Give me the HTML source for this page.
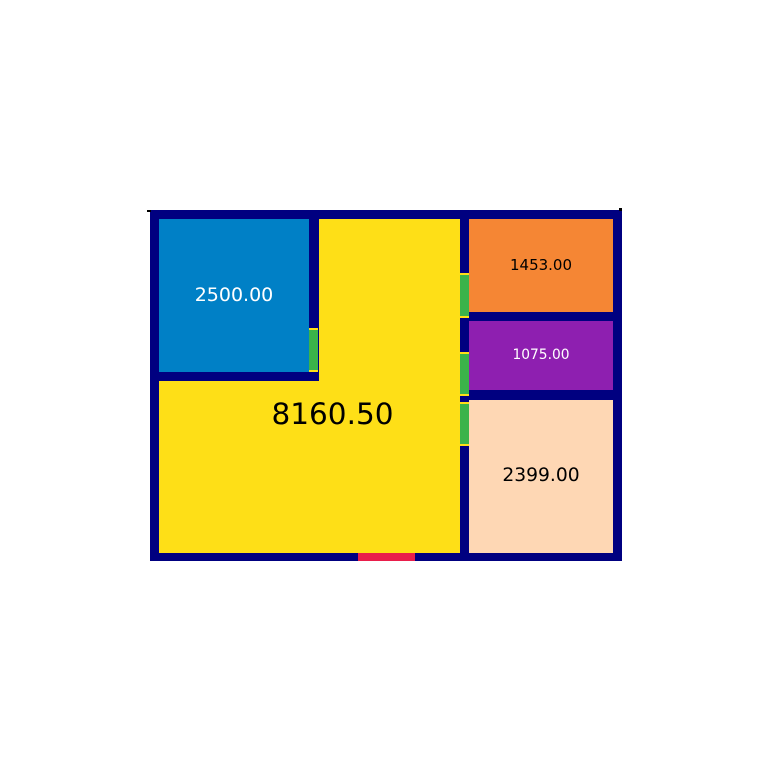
<!DOCTYPE html>
<html><head><style>
body{margin:0;width:769px;height:770px;background:#fff;position:relative;overflow:hidden;font-family:"DejaVu Sans","Liberation Sans",sans-serif}
div{position:absolute}
.t{display:flex;align-items:center;justify-content:center;white-space:nowrap}
.t span{position:relative;top:-1px}
</style></head><body>
<div style="left:150px;top:210px;width:472px;height:351px;background:#000080"></div>
<div style="left:147px;top:210px;width:4px;height:2px;background:#000"></div>
<div style="left:619px;top:208px;width:3px;height:3px;background:#000"></div>
<div style="left:319px;top:219px;width:141px;height:334px;background:#fedf17"></div>
<div style="left:159px;top:381px;width:301px;height:172px;background:#fedf17"></div>
<div class="t" style="left:159px;top:219px;width:150px;height:153px;background:#0080c6;color:#fff;font-size:19px"><span>2500.00</span></div>
<div class="t" style="left:469px;top:219px;width:144px;height:93px;background:#f58634;color:#000;font-size:15px"><span>1453.00</span></div>
<div class="t" style="left:469px;top:321px;width:144px;height:69px;background:#8e1fb0;color:#fff;font-size:13.8px"><span>1075.00</span></div>
<div class="t" style="left:469px;top:400px;width:144px;height:153px;background:#fed7b4;color:#000;font-size:18.7px"><span>2399.00</span></div>
<div class="t" style="left:230px;top:396px;width:205px;height:38px;color:#000;font-size:29.5px"><span>8160.50</span></div>
<div style="left:309px;top:328px;width:9px;height:44px;background:#3bb34a;border-top:2px solid #fedf17;border-bottom:2px solid #fedf17;box-sizing:border-box"></div>
<div style="left:460px;top:273px;width:9px;height:45px;background:#3bb34a;border-top:2px solid #fedf17;border-bottom:2px solid #fedf17;box-sizing:border-box"></div>
<div style="left:460px;top:352px;width:9px;height:44px;background:#3bb34a;border-top:2px solid #fedf17;border-bottom:2px solid #fedf17;box-sizing:border-box"></div>
<div style="left:460px;top:402px;width:9px;height:44px;background:#3bb34a;border-top:2px solid #fedf17;border-bottom:2px solid #fedf17;box-sizing:border-box"></div>
<div style="left:358px;top:553px;width:57px;height:8px;background:#e91e4b"></div>
</body></html>
